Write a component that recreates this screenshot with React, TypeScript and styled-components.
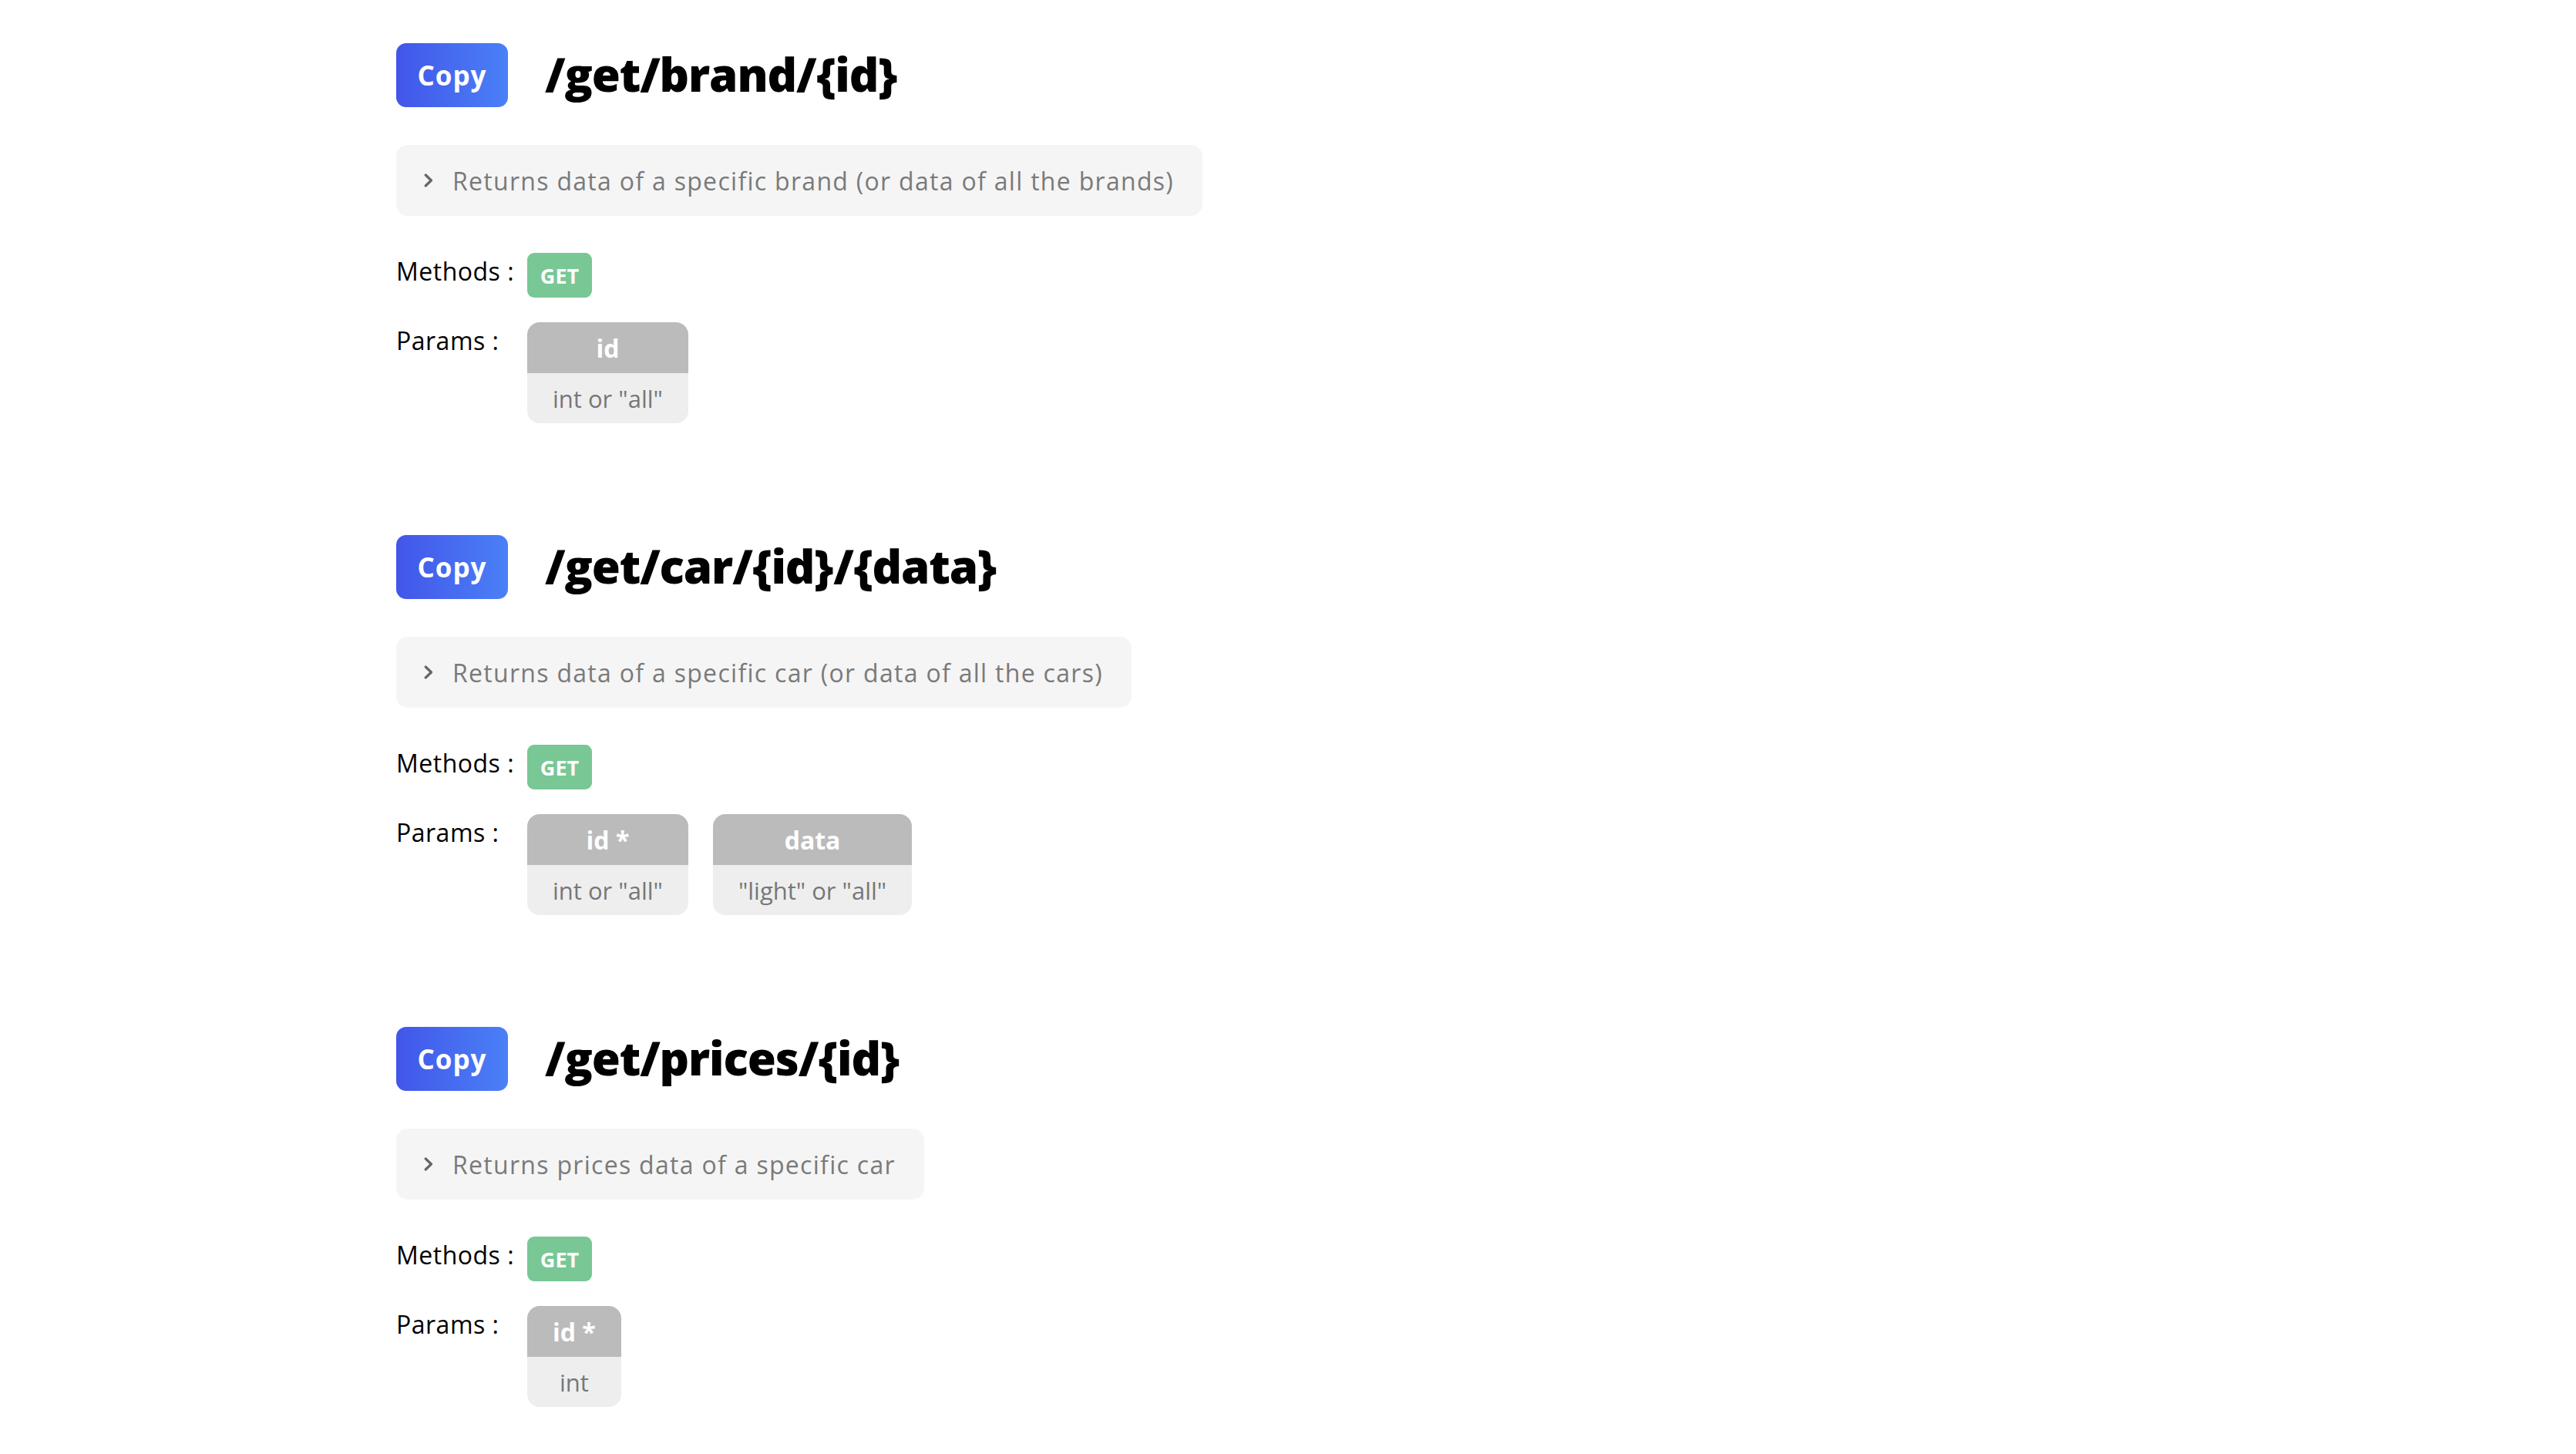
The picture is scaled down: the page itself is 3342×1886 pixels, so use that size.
import React from "react";
import styled, { createGlobalStyle } from "styled-components";

const GlobalStyle = createGlobalStyle`
  html, body { margin: 0; padding: 0; background: #ffffff; }
  body { font-family: "Open Sans", "Noto Sans", sans-serif; color: #000; }
`;

const Page = styled.main`
  display: flex;
  flex-direction: column;
  gap: 145px;
  padding: 56px 0 60px 514px;
`;

const Section = styled.section`
  display: flex;
  flex-direction: column;
  align-items: flex-start;
`;

const Header = styled.div`
  display: flex;
  align-items: center;
  gap: 48px;
`;

const CopyButton = styled.button`
  height: 83px;
  width: 145px;
  border: none;
  border-radius: 13px;
  background: linear-gradient(90deg, #4256e9 0%, #4a80f7 100%);
  color: #fff;
  font-family: "Open Sans", sans-serif;
  font-weight: 700;
  font-size: 35px;
  letter-spacing: 1px;
  padding: 0;
  cursor: pointer;
`;

const Route = styled.h2`
  margin: 0;
  font-family: "Open Sans", sans-serif;
  font-weight: 800;
  font-size: 60px;
  line-height: 1;
  letter-spacing: -1.1px;
  color: #000;
  padding-bottom: 4px;
`;

const Summary = styled.div`
  margin-top: 49px;
  display: inline-flex;
  align-items: center;
  gap: 25px;
  height: 92px;
  box-sizing: border-box;
  padding: 0 37px 0 36px;
  background: #f5f5f5;
  border-radius: 15px;
  color: #7a7a7a;
  font-size: 32px;
  letter-spacing: 1.3px;
`;

const Row = styled.div<{ $top: number }>`
  margin-top: ${(p) => p.$top}px;
  display: flex;
  align-items: flex-start;
`;

const Label = styled.div`
  width: 170px;
  flex: none;
  font-size: 32px;
  line-height: 48px;
  letter-spacing: 0.5px;
  color: #000;
`;

const MethodBadge = styled.span`
  display: inline-flex;
  align-items: center;
  justify-content: center;
  width: 84px;
  height: 58px;
  border-radius: 9px;
  background: #78c795;
  color: #fff;
  font-weight: 700;
  font-size: 27px;
`;

const Params = styled.div`
  display: flex;
  gap: 32px;
`;

const ParamCard = styled.div`
  display: flex;
  flex-direction: column;
  border-radius: 16px;
  overflow: hidden;
  text-align: center;
`;

const ParamName = styled.div`
  height: 66px;
  display: flex;
  align-items: center;
  justify-content: center;
  padding: 0 33px;
  background: #bbbbbb;
  color: #fff;
  font-weight: 700;
  font-size: 32px;
`;

const ParamType = styled.div`
  height: 65px;
  display: flex;
  align-items: center;
  justify-content: center;
  padding: 0 33px;
  background: #eeeeee;
  color: #777;
  font-size: 31px;
  white-space: nowrap;
`;

const Chevron = () => (
  <svg width="12" height="18" viewBox="0 0 12 18" fill="none">
    <path d="M2.2 2 L9.5 9 L2.2 16" stroke="#666" strokeWidth="3.2" strokeLinecap="round" strokeLinejoin="round" />
  </svg>
);

type Param = { name: string; type: string };
type Endpoint = { route: string; desc: string; params: Param[] };

const endpoints: Endpoint[] = [
  {
    route: "/get/brand/{id}",
    desc: "Returns data of a specific brand (or data of all the brands)",
    params: [{ name: "id", type: 'int or "all"' }],
  },
  {
    route: "/get/car/{id}/{data}",
    desc: "Returns data of a specific car (or data of all the cars)",
    params: [
      { name: "id *", type: 'int or "all"' },
      { name: "data", type: '"light" or "all"' },
    ],
  },
  {
    route: "/get/prices/{id}",
    desc: "Returns prices data of a specific car",
    params: [{ name: "id *", type: "int" }],
  },
];

export default function App() {
  return (
    <>
      <GlobalStyle />
      <Page>
        {endpoints.map((e) => (
          <Section key={e.route}>
            <Header>
              <CopyButton>Copy</CopyButton>
              <Route>{e.route}</Route>
            </Header>
            <Summary>
              <Chevron />
              <span>{e.desc}</span>
            </Summary>
            <Row $top={48}>
              <Label>Methods :</Label>
              <MethodBadge>GET</MethodBadge>
            </Row>
            <Row $top={32}>
              <Label>Params :</Label>
              <Params>
                {e.params.map((p) => (
                  <ParamCard key={p.name}>
                    <ParamName>{p.name}</ParamName>
                    <ParamType>{p.type}</ParamType>
                  </ParamCard>
                ))}
              </Params>
            </Row>
          </Section>
        ))}
      </Page>
    </>
  );
}
